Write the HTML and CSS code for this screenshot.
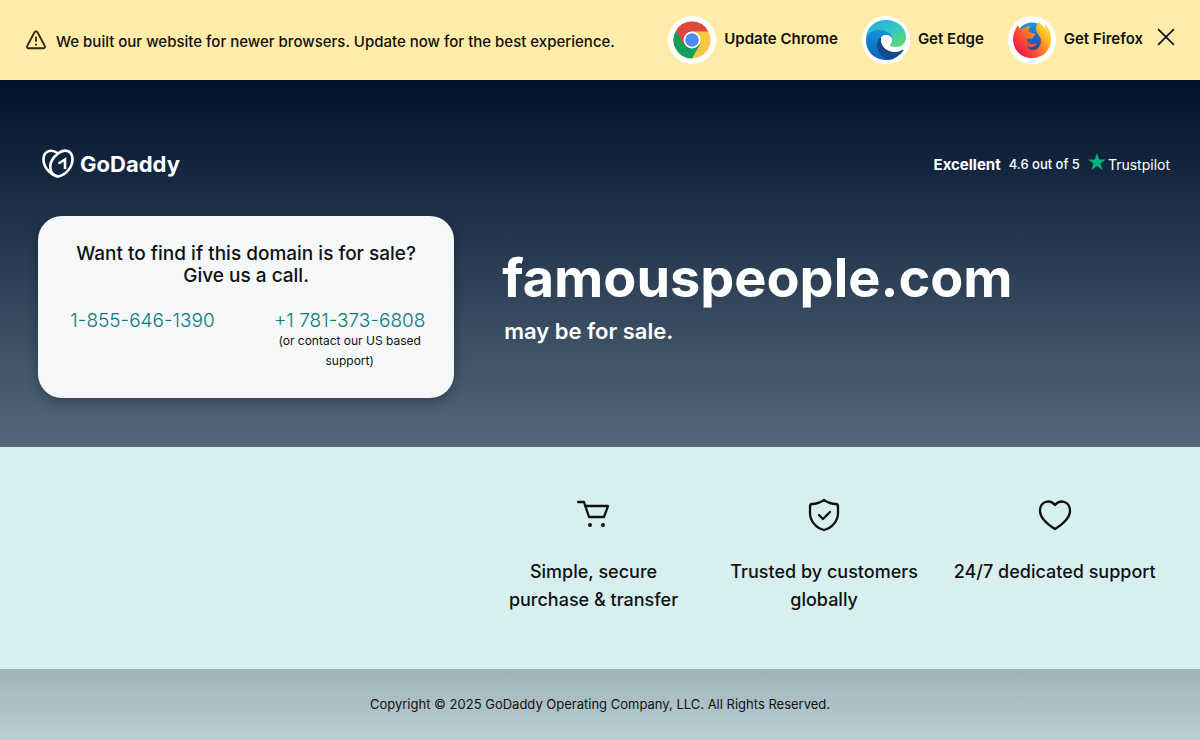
FILE: index.html
```html
<!DOCTYPE html>
<html lang="en">
<head>
<meta charset="utf-8">
<meta name="viewport" content="width=device-width, initial-scale=1">
<title>famouspeople.com</title>
<link rel="stylesheet" href="styles.css">
</head>

<body>

<div class="banner">
    <svg class="warning" viewBox="0 0 24 24" aria-hidden="true">
        <path d="M10.4 3.6 2.500 18.2A1.8 1.8 0 0 0 4.1 21h15.8a1.8 1.8 0 0 0 1.6-2.8L13.6 3.6a1.8 1.8 0 0 0-3.2 0Z"/>
        <path d="M12 8.500v5.500M12 16v2"/>
    </svg>
    <p>We built our website for newer browsers. Update now for the best experience.</p>
    <nav class="browsers">
        <a href="#">
            <svg class="browser-icon" viewBox="0 0 48 48" aria-hidden="true">
                <circle cx="24" cy="24" r="24" fill="#fff"/>
                <circle cx="24" cy="24" r="18.500" fill="#fbc740"/>
                <path d="M24 24 8 14.700A18.500 18.500 0 0 0 24 42.500L32 28.600Z" fill="#149e5b"/>
                <path d="M8 14.700A18.500 18.500 0 0 1 40.300 15.500H24L16 28.600Z" fill="#dc4a3d"/>
                <circle cx="24" cy="24" r="8.400" fill="#fff"/>
                <circle cx="24" cy="24" r="6.800" fill="#4c8bf5"/>
            </svg>
            <span>Update Chrome</span>
        </a>
        <a href="#">
            <svg class="browser-icon" viewBox="0 0 48 48" aria-hidden="true">
                <defs>
                    <linearGradient id="edge-top" x1="0" y1="0" x2="1" y2="1">
                        <stop offset="0" stop-color="#1fa9dd"/>
                        <stop offset=".5" stop-color="#33c5ca"/>
                        <stop offset="1" stop-color="#66e052"/>
                    </linearGradient>
                    <linearGradient id="edge-left" x1="0" y1="0" x2="0" y2="1">
                        <stop offset="0" stop-color="#148fdc"/>
                        <stop offset="1" stop-color="#0c64b8"/>
                    </linearGradient>
                </defs>
                <circle cx="24" cy="24" r="24" fill="#fff"/>
                <path d="M4 22C5 11 13 4 24 4c12 0 20 8 20 17 0 7-5 10-10 10-4 0-6-1-6-2s2-2 2-5c0-4-5-8-12-8-8 0-12 4-14 6Z" fill="url(#edge-top)"/>
                <path d="M4 24c0-6 6-10 14-10 7 0 12 4 12 9-1-2-3-4-6-4-5 0-9 6-7 13 2 7 8 12 14 11-2 1-4 1-7 1C12 44 4 35 4 24Z" fill="url(#edge-left)"/>
                <path d="M19 21c-4 3-5 8-3 13 3 8 9 10 15 9 4-2 7-4 10-8 1-1 0-2-1-1-10 4-18 0-20-6-1-2-1-5-1-7Z" fill="#114a8c"/>
                <path d="M24 19c-3 0-5 2-5 5 0 7 7 12 14 12 4 0 7-2 9-4l1-2c-3 2-6 2-9 2-4 0-7-1-7-3 0-1 3-2 3-5s-3-5-6-5Z" fill="#fff"/>
            </svg>
            <span>Get Edge</span>
        </a>
        <a href="#">
            <svg class="browser-icon" viewBox="0 0 48 48" aria-hidden="true">
                <defs>
                    <linearGradient id="fox" x1="1" y1=".1" x2=".1" y2=".8">
                        <stop offset="0" stop-color="#fff44f"/>
                        <stop offset=".35" stop-color="#ffa91e"/>
                        <stop offset=".65" stop-color="#ff5a2a"/>
                        <stop offset="1" stop-color="#ee1655"/>
                    </linearGradient>
                    <linearGradient id="globe" x1=".5" y1="0" x2=".5" y2="1">
                        <stop offset="0" stop-color="#129bf2"/>
                        <stop offset="1" stop-color="#343392"/>
                    </linearGradient>
                </defs>
                <circle cx="24" cy="24" r="24" fill="#fff"/>
                <circle cx="24" cy="22" r="15.500" fill="url(#globe)"/>
                <path d="M10 9c-3 4-5 9-5 14 0 11 8 19 19 19s19-8 19-19c0-5-1-10-6-15v4c-3-2-5-4-6-6-4 4-4 8-1 12 5 6 3 12-1 15-4 2-9 1-10-3 2 1 5 2 7 0l3-2c-2-1-4 1-6 0-3-1-5-3-4-5 2-1 4 0 6-1 0-2 2-2 2-4l-6-2c-1-2 0-4 2-6-4 0-7 1-9 3-2 0-3-1-4-4Z" fill="url(#fox)"/>
            </svg>
            <span>Get Firefox</span>
        </a>
    </nav>
    <button class="close" aria-label="Close">
        <svg viewBox="0 0 16 16" aria-hidden="true"><path d="m1 1 14 14M15 1 1 15"/></svg>
    </button>
</div>

<main>
    <section class="hero">
        <div class="topbar">
            <a class="logo" href="#">
                <svg viewBox="0 0 32 30" aria-hidden="true">
                    <path d="M16 27.500C8 26 1.500 18 1.500 10.500 1.500 2 9-.5 15.500 4"/>
                    <path d="M16 27.500C24 26 30.500 18 30.500 10.500 30.500 1 22-.5 16 4.500 9 10 7 16 9 22c1 3 4 5 7 5.500Z"/>
                    <path d="M16.500 14.500 23 10.500v9.500"/>
                </svg>
                <span>GoDaddy</span>
            </a>
            <div class="rating">
                <b>Excellent</b>
                <span>4.6 out of 5</span>
                <a class="trustpilot" href="#">
                    <svg viewBox="0 0 20 20" aria-hidden="true"><path d="m10 0 2.400 7.200H20l-6.100 4.500 2.300 7.300-6.200-4.500L3.800 19l2.300-7.300L0 7.200h7.600Z"/></svg>
                    Trustpilot
                </a>
            </div>
        </div>

        <div class="columns">
            <div class="card">
                <h2>Want to find if this domain is for sale? Give us a call.</h2>
                <div class="phones">
                    <div><a href="tel:18556461390">1-855-646-1390</a></div>
                    <div>
                        <a href="tel:+17813736808">+1 781-373-6808</a>
                        <p>(or contact our US based support)</p>
                    </div>
                </div>
            </div>
            <div class="domain">
                <h1>famouspeople.com</h1>
                <p>may be for sale.</p>
            </div>
        </div>
    </section>

    <section class="features">
        <ul>
            <li>
                <svg viewBox="0 0 36 36" aria-hidden="true">
                    <path d="M2 5h6l5 15h15l4-11H9"/>
                    <circle class="dot" cx="14" cy="28" r="2"/>
                    <circle class="dot" cx="27" cy="28" r="2"/>
                </svg>
                <p>Simple, secure purchase &amp; transfer</p>
            </li>
            <li>
                <svg viewBox="0 0 36 36" aria-hidden="true">
                    <path d="M18 3q-6 4-12 4Q4 7 4 10v6c0 8 6 15 14 17 8-2 14-9 14-17v-6q0-3-2-3-6 0-12-4Z"/>
                    <path d="m13 18 4 4 7-7"/>
                </svg>
                <p>Trusted by customers globally</p>
            </li>
            <li>
                <svg viewBox="0 0 36 36" aria-hidden="true">
                    <path d="M18 32C10 27 3 21 3 14 3 4 13 2 18 8c5-6 15-4 15 6 0 7-7 13-15 18Z"/>
                </svg>
                <p>24/7 dedicated support</p>
            </li>
        </ul>
    </section>
</main>

<footer>Copyright © 2025 GoDaddy Operating Company, LLC. All Rights Reserved.</footer>

</body>
</html>
```

FILE: styles.css
```css
* {
    box-sizing: border-box;
}

body {
    margin: 0;
    min-height: 100vh;
    display: flex;
    flex-direction: column;
    font-family: Inter, "Liberation Sans", sans-serif;
    color: #111;
}

h1, h2, p, ul {
    margin: 0;
    padding: 0;
}

a {
    color: inherit;
    text-decoration: none;
}

svg {
    display: block;
    flex: none;
}

/* Browser banner */

.banner {
    display: flex;
    align-items: center;
    padding: 16px 25px;
    background: #feeca8;
    font-size: 15px;
    font-weight: 600;
    line-height: 24px;
}

.banner p {
    padding-top: 4px;
    font-weight: 500;
}

.warning {
    width: 22px;
    height: 22px;
    margin-right: 9px;
    fill: none;
    stroke: #32290f;
    stroke-width: 2;
}

.browsers {
    display: flex;
    gap: 24px;
    margin-left: auto;
}

.browsers a {
    display: flex;
    align-items: center;
    gap: 8px;
}

.browsers span {
    padding-bottom: 2px;
}

.browser-icon {
    width: 48px;
    height: 48px;
}

.close {
    margin-left: 14px;
    padding: 0 0 6px;
    border: none;
    background: none;
    cursor: pointer;
}

.close svg {
    width: 18px;
    height: 18px;
    fill: none;
    stroke: #111;
    stroke-width: 1.500;
}

/* Hero */

main {
    flex: 1;
    display: flex;
    flex-direction: column;
}

.hero {
    padding: 68px 30px 49px 38px;
    background: linear-gradient(#00112c, #54687a);
    color: white;
}

.topbar {
    display: flex;
    justify-content: space-between;
    align-items: center;
    height: 32px;
    margin-bottom: 36px;
    padding-left: 4px;
}

.logo {
    display: flex;
    align-items: center;
    gap: 6px;
    font-size: 22px;
    font-weight: 700;
}

.logo svg {
    width: 32px;
    height: 30px;
    fill: none;
    stroke: white;
    stroke-width: 2.600;
}

.rating {
    display: flex;
    align-items: center;
    gap: 8px;
    font-size: 13px;
    font-weight: 500;
}

.rating b {
    font-size: 15px;
}

.trustpilot {
    display: flex;
    align-items: center;
    gap: 2px;
    font-size: 14px;
    font-weight: 400;
}

.trustpilot svg {
    width: 18px;
    height: 18px;
    margin-bottom: 4px;
    fill: #00b67a;
}

.columns {
    display: grid;
    grid-template-columns: 7fr 11fr;
}

.card {
    margin-right: 24px;
    padding: 27px 24px;
    border-radius: 24px;
    background: #f5f7f9;
    box-shadow: 0 4px 12px rgba(0,0,0,0.3);
    color: #111;
    text-align: center;
}

.card h2 {
    font-size: 19px;
    font-weight: 500;
    line-height: 22px;
}

.phones {
    display: grid;
    grid-template-columns: 1fr 1fr;
    gap: 46px;
    margin-top: 24px;
}

.phones > div {
    display: flex;
    flex-direction: column;
    align-items: center;
}

.phones a {
    color: #0b7b7a;
    font-size: 19px;
    font-weight: 300;
    line-height: 20px;
    white-space: nowrap;
}

.phones p {
    font-size: 12px;
    line-height: 20px;
}

.domain {
    padding: 28px 0 0 24px;
}

.domain h1 {
    font-size: 54px;
    font-weight: 700;
    line-height: 68px;
}

.domain p {
    padding-left: 2px;
    margin-top: 4px;
    font-size: 22px;
    font-weight: 600;
    line-height: 30px;
}

/* Features */

.features {
    flex: 1;
    padding: 50px 30px 54px 38px;
    background: #d8efef;
}

.features ul {
    width: calc(100% * 11 / 18);
    margin-left: auto;
    display: grid;
    grid-template-columns: repeat(3, 1fr);
    list-style: none;
}

.features li {
    display: flex;
    flex-direction: column;
    align-items: center;
    text-align: center;
}

.features svg {
    width: 36px;
    height: 36px;
    fill: none;
    stroke: #111;
    stroke-width: 2.300;
    stroke-linecap: round;
    stroke-linejoin: round;
}

.features .dot {
    fill: #111;
    stroke: none;
}

.features p {
    padding: 0 12px;
    margin-top: 25px;
    font-size: 18px;
    font-weight: 500;
    line-height: 28px;
}

/* Footer */

footer {
    padding: 24px;
    background: linear-gradient(#a0b3b9, #b9cfd3);
    font-size: 13px;
    line-height: 23px;
    text-align: center;
}
```
